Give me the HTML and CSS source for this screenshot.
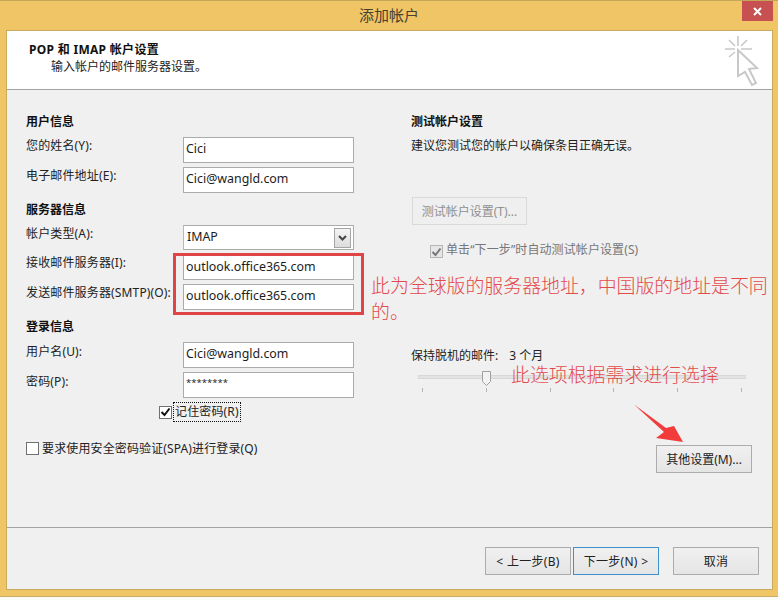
FILE: index.html
```html
<!DOCTYPE html>
<html lang="zh-CN">
<head>
<meta charset="utf-8">
<title>添加帐户</title>
<link rel="stylesheet" href="styles.css">
</head>
<body>
<div class="window">
  <div class="titlebar">
    <span></span>
    <div class="title">添加帐户</div>
    <div class="close"><svg width="11" height="11" viewBox="0 0 11 11"><path d="M2 2 L9 9 M9 2 L2 9" stroke="#fff" stroke-width="2"/></svg></div>
  </div>
  <div class="panel">
    <header class="head">
      <div class="head-text">
        <div class="head-title">POP 和 IMAP 帐户设置</div>
        <div class="head-sub">输入帐户的邮件服务器设置。</div>
      </div>
      <svg class="head-icon" width="38" height="54" viewBox="723 34 38 54" fill="none" stroke="#c8c8c8" stroke-width="1.6">
        <path d="M738 36V46M725 49H735M741 49H752M729 40L735 46M747 40L741 46M729 57L735 52"/>
        <path d="M738 50L757 68L749 69L756 83L752 85L745 72L738 76Z" stroke-width="2" fill="#fff"/>
      </svg>
    </header>
    <main class="main">
      <section class="col-left">
        <h3 class="group">用户信息</h3>
        <div class="row"><span class="lbl">您的姓名(Y):</span><div class="field">Cici</div></div>
        <div class="row"><span class="lbl">电子邮件地址(E):</span><div class="field">Cici@wangld.com</div></div>
        <h3 class="group">服务器信息</h3>
        <div class="row row-select"><span class="lbl">帐户类型(A):</span>
          <div class="field short select">IMAP<span class="drop"><svg width="9" height="6" viewBox="0 0 9 6"><path d="M1 1L4.500 4.500L8 1" fill="none" stroke="#444" stroke-width="2"/></svg></span></div>
        </div>
        <div class="row"><span class="lbl lbl-high">接收邮件服务器(I):</span><div class="field short">outlook.office365.com</div></div>
        <div class="row"><span class="lbl">发送邮件服务器(SMTP)(O):</span><div class="field">outlook.office365.com</div></div>
        <h3 class="group">登录信息</h3>
        <div class="row"><span class="lbl lbl-low">用户名(U):</span><div class="field">Cici@wangld.com</div></div>
        <div class="row"><span class="lbl lbl-low">密码(P):</span><div class="field pw">********</div></div>
        <div class="remember">
          <span class="box"><svg width="11" height="10" viewBox="0 0 11 10"><path d="M1.500 5L4.500 8L9.500 1.500" fill="none" stroke="#111" stroke-width="2"/></svg></span>
          <span class="focus">记住密码(R)</span>
        </div>
        <div class="spa"><span class="box"></span><span>要求使用安全密码验证(SPA)进行登录(Q)</span></div>
      </section>
      <section class="col-right">
        <h3 class="group">测试帐户设置</h3>
        <p class="desc">建议您测试您的帐户以确保条目正确无误。</p>
        <div class="btn test">测试帐户设置(T)...</div>
        <div class="autotest">
          <span class="box off"><svg width="11" height="10" viewBox="0 0 11 10"><path d="M1.500 5L4.500 8L9.500 1.500" fill="none" stroke="#777" stroke-width="2"/></svg></span>
          <span class="autotest-text">单击“下一步”时自动测试帐户设置(S)</span>
        </div>
        <div class="offline"><span>保持脱机的邮件:</span><span>3 个月</span></div>
        <div class="slider">
          <div class="track"></div>
          <svg class="thumb" width="9" height="15" viewBox="0 0 9 15"><path d="M.5.5H8.500V10.500L4.500 14.500L.5 10.500Z" fill="#f2f2f2" stroke="#a0a0a0"/></svg>
          <div class="ticks"><i></i><i></i><i></i><i></i><i></i><i></i></div>
        </div>
        <div class="btn more">其他设置(M)...</div>
      </section>
    </main>
    <footer class="foot">
      <div class="btn nav">&lt; 上一步(B)</div>
      <div class="btn nav primary">下一步(N) &gt;</div>
      <div class="btn nav cancel">取消</div>
    </footer>
  </div>
  <div class="redbox"></div>
  <div class="note note-a">此为全球版的服务器地址，中国版的地址是不同的。</div>
  <div class="note note-b">此选项根据需求进行选择</div>
  <svg class="arrow" width="778" height="597" viewBox="0 0 778 597"><path d="M634 404.500L666 428L674 426L683 442L656 438L664 432Z" fill="#f23b3b"/></svg>
</div>
</body>
</html>
```
FILE: styles.css
```css
* { box-sizing: border-box; }
html, body { margin: 0; padding: 0; background: #fbfbf8; }
body {
  font-family: "Noto Sans", "Noto Sans CJK SC", sans-serif;
  font-size: 12px;
  color: #222;
  width: 778px;
  height: 600px;
  overflow: hidden;
}
.window {
  position: relative;
  width: 778px;
  height: 597px;
  background: #efc566;
  border-top: 1px solid #c4a659;
  border-bottom: 1px solid #c9ad69;
  display: flex;
  flex-direction: column;
  padding: 0 5px 6px 6px;
}
.titlebar {
  height: 29px;
  flex: none;
  display: grid;
  grid-template-columns: 1fr auto 1fr;
  margin: 0 0 0 -1px;
}
.title {
  font-size: 15px;
  line-height: 28px;
  color: #4a4030;
}
.close {
  justify-self: end;
  width: 31px;
  height: 20px;
  background: #c75050;
  display: flex;
  align-items: center;
  justify-content: center;
}
.panel {
  flex: 1;
  display: flex;
  flex-direction: column;
  background: #f0f0f0;
  border: 1px solid #c9ab5e;
}
.head {
  height: 59px;
  flex: none;
  background: #fff;
  border-bottom: 1px solid #a3a3a3;
  display: flex;
  justify-content: space-between;
  padding: 3px 11px 0 22px;
}
.head-text { padding-top: 8px; }
.head-title { font-weight: 700; line-height: 16px; color: #111; letter-spacing: .3px; }
.head-sub { margin: 1px 0 0 22px; line-height: 16px; }
.head-icon { flex: none; }
.main {
  flex: 1;
  display: flex;
  padding: 24px 20px 0 19px;
}
.col-left { width: 385px; flex: none; }
.col-right { flex: 1; display: flex; flex-direction: column; }
.group {
  margin: 0 0 7px;
  font-size: 12px;
  line-height: 16px;
  font-weight: 700;
  color: #111;
}
.row {
  display: grid;
  grid-template-columns: 157px 171px;
  margin-bottom: 4px;
}
.row-select { margin-bottom: 5px; }
.row + .group { margin-top: 9px; }
.lbl { line-height: 16px; padding-top: 1px; white-space: nowrap; letter-spacing: .15px; }
.lbl-high { padding-top: 0; }
.lbl-low { padding-top: 2px; }
.field {
  height: 26px;
  background: #fff;
  border: 1px solid #ababab;
  padding-left: 2px;
  font-size: 12.400px;
  line-height: 21px;
  color: #1c1c1c;
}
.field.short { height: 25px; }
.field.pw { font-size: 9.500px; line-height: 20px; }
.select { position: relative; border-left-color: #9fc0dc; padding-left: 3px; }
.drop {
  position: absolute;
  right: 2px;
  top: 2px;
  width: 17px;
  height: 20px;
  background: linear-gradient(#f4f4f4, #dcdcdc);
  border: 1px solid #a5a5a5;
  display: flex;
  align-items: center;
  justify-content: center;
}
.box {
  flex: none;
  width: 13px;
  height: 13px;
  background: #fff;
  border: 1px solid #707070;
  display: flex;
  align-items: center;
  justify-content: center;
}
.box.off { background: #e6e6e6; border-color: #b5b5b5; }
.remember {
  display: flex;
  align-items: center;
  gap: 2px;
  margin: 5px 0 0 133px;
  height: 18px;
}
.focus { outline: 1px dotted #111; line-height: 18px; padding: 0 1px; letter-spacing: .15px; }
.spa {
  display: flex;
  align-items: center;
  gap: 3px;
  margin-top: 19px;
  height: 16px;
  letter-spacing: .13px;
}
.desc { margin: 0; height: 16px; padding-top: 1px; line-height: 16px; }
.btn {
  height: 28px;
  border: 1px solid #acacac;
  background: linear-gradient(#f0f0f0, #e5e5e5);
  display: flex;
  align-items: center;
  justify-content: center;
  color: #222;
}
.test {
  width: 115px;
  margin: 44px 0 0 1px;
  color: #8f8f8f;
  background: #efefef;
  border-color: #d9d9d9;
}
.autotest {
  display: flex;
  align-items: flex-start;
  gap: 3px;
  margin: 20px 0 0 19px;
  height: 13px;
  color: #777;
  letter-spacing: .1px;
}
.autotest-text { line-height: 13px; margin-top: -2px; }
.offline {
  display: flex;
  gap: 11px;
  margin-top: 90px;
  line-height: 16px;
}
.slider { position: relative; width: 328px; margin: 7px 0 0 7px; height: 24px; }
.track {
  margin-top: 4px;
  height: 4px;
  background: #e3e3e3;
  border: 1px solid #d8d8d8;
}
.thumb { position: absolute; left: 64px; top: 0; }
.ticks {
  display: flex;
  justify-content: space-between;
  padding: 0 4px;
  margin-top: 9px;
}
.ticks i { display: block; width: 1px; height: 4px; background: #b5b5b5; }
.more { width: 96px; align-self: flex-end; margin-top: 50px; }
.foot {
  height: 62px;
  flex: none;
  border-top: 1px solid #a3a3a3;
  display: flex;
  justify-content: flex-end;
  gap: 2px;
  padding: 19px 13px 0 0;
}
.nav { width: 86px; letter-spacing: .3px; }
.primary { border-color: #3d8fce; }
.cancel { margin-left: 12px; }
.redbox {
  position: absolute;
  left: 173px;
  top: 252px;
  width: 191px;
  height: 62px;
  border: 3px solid #e04444;
}
.note {
  position: absolute;
  font-family: "Noto Sans CJK SC", sans-serif;
  font-size: 18.900px;
  line-height: 26px;
  font-weight: 300;
  color: #e34a4a;
}
.note-a { left: 371px; top: 271px; width: 400px; }
.note-b { left: 511px; top: 363px; line-height: 20px; white-space: nowrap; }
.arrow { position: absolute; left: 0; top: -1px; pointer-events: none; }
```
